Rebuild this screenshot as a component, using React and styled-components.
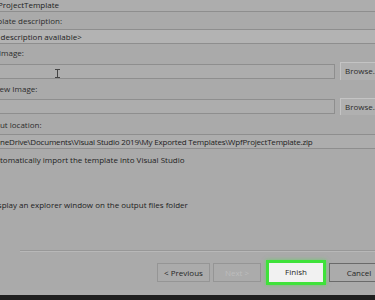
import React from "react";
import styled, { createGlobalStyle } from "styled-components";

const Global = createGlobalStyle`
  html, body {
    margin: 0;
    padding: 0;
    background: #aaaaaa;
  }
  body {
    font-family: "Open Sans", "Noto Sans", sans-serif;
    font-size: 8px;
    color: #2a2a2a;
  }
`;

const Screen = styled.div`
  width: 375px;
  height: 300px;
  overflow: hidden;
  display: flex;
  flex-direction: column;
  background: #aaaaaa;
`;

// dialog is cropped on the left, so it starts a bit off-screen
const Dialog = styled.div`
  flex: 1;
  margin-left: -22px;
`;

const Label = styled.div`
  height: ${(p) => p.h || 18}px;
  line-height: ${(p) => p.h || 18}px;
  padding-left: 3px;
  white-space: nowrap;
  color: #2c2c2c;
`;

const TextBox = styled.div`
  box-sizing: border-box;
  height: ${(p) => p.h || 15}px;
  line-height: ${(p) => (p.h || 15) - 2}px;
  margin-top: ${(p) => p.mt || 0}px;
  padding-left: ${(p) => p.pl || 5}px;
  letter-spacing: ${(p) => p.ls || 0}px;
  flex: ${(p) => (p.grow ? 1 : "none")};
  border-top: 1px solid #8e8e8e;
  border-bottom: 1px solid #8e8e8e;
  border-right: ${(p) => (p.grow ? "1px solid #8e8e8e" : "none")};
  background: ${(p) => (p.light ? "#b3b3b3" : "#adadad")};
  white-space: nowrap;
  overflow: hidden;
  color: #222;
  position: relative;
`;

const FieldRow = styled.div`
  display: flex;
  align-items: center;
  gap: 5px;
  height: ${(p) => p.h || 18}px;
`;

const BrowseButton = styled.div`
  box-sizing: border-box;
  flex: none;
  width: 35px;
  height: ${(p) => p.h || 18}px;
  line-height: ${(p) => (p.h || 18) - 2}px;
  padding-left: 4px;
  background: #b0b0b0;
  border-left: 1px solid #c4c4c4;
  border-top: 1px solid #c4c4c4;
  white-space: nowrap;
  color: #2c2c2c;
`;

const Cursor = styled.span`
  position: absolute;
  left: 77px;
  top: 4px;
  width: 5px;
  height: 9px;
  &::before {
    content: "";
    position: absolute;
    left: 2px;
    top: 0;
    width: 1px;
    height: 9px;
    background: #444;
  }
  &::after {
    content: "";
    position: absolute;
    left: 0;
    top: 0;
    width: 5px;
    height: 9px;
    border-top: 1px solid #444;
    border-bottom: 1px solid #444;
    box-sizing: border-box;
  }
`;

const CheckRow = styled.div`
  height: 18px;
  line-height: 18px;
  padding-left: 12px;
  margin-top: ${(p) => p.mt || 0}px;
  white-space: nowrap;
  color: #222;
`;

const Separator = styled.div`
  margin: ${(p) => p.mt || 0}px 0 0 42px;
  height: 0;
  border-top: 1px solid #989898;
  border-bottom: 1px solid #b8b8b8;
`;

const ButtonBar = styled.div`
  display: flex;
  gap: 3px;
  margin: 11px 0 0 179px;
  align-items: center;
`;

const DialogButton = styled.div`
  box-sizing: border-box;
  flex: none;
  width: ${(p) => p.w || 53}px;
  height: 19px;
  line-height: 17px;
  text-align: center;
  border: 1px solid ${(p) => (p.dark ? "#6a6a6a" : "#959595")};
  background: #ababab;
  color: ${(p) => (p.disabled ? "#bdbdbd" : "#262626")};
  white-space: nowrap;
`;

const FinishButton = styled.div`
  box-sizing: border-box;
  flex: none;
  width: 54px;
  height: 19px;
  line-height: 17px;
  text-align: center;
  background: #f1f1f1;
  color: #262626;
  outline: 3px solid #3fe23a;
  box-shadow: 0 0 4px 3px rgba(60, 230, 60, 0.55);
  margin: 0 3px 0 5px;
`;

const Taskbar = styled.div`
  flex: none;
  height: 5px;
  background: #1e1e1e;
`;

export default function App() {
  return (
    <>
      <Global />
      <Screen>
        <Dialog>
          <TextBox h={15} mt={-3}>
            WpfProjectTemplate
          </TextBox>
          <Label h={17}>Template description:</Label>
          <TextBox h={15} light>
            &lt;No description available&gt;
          </TextBox>
          <Label h={18}>Icon Image:</Label>
          <FieldRow h={18}>
            <TextBox h={15} grow>
              <Cursor />
            </TextBox>
            <BrowseButton>Browse...</BrowseButton>
          </FieldRow>
          <Label h={18}>Preview Image:</Label>
          <FieldRow h={17}>
            <TextBox h={15} grow />
            <BrowseButton h={17}>Browse...</BrowseButton>
          </FieldRow>
          <Label h={19}>Output location:</Label>
          <TextBox h={15} pl={16} ls={-0.2}>
            OneDrive\Documents\Visual Studio 2019\My Exported Templates\WpfProjectTemplate.zip
          </TextBox>
          <CheckRow mt={2}>Automatically import the template into Visual Studio</CheckRow>
          <CheckRow mt={27}>Display an explorer window on the output files folder</CheckRow>
          <Separator mt={36} />
          <ButtonBar>
            <DialogButton>&lt; Previous</DialogButton>
            <DialogButton disabled w={48}>Next &gt;</DialogButton>
            <FinishButton>Finish</FinishButton>
            <DialogButton dark w={60}>Cancel</DialogButton>
          </ButtonBar>
        </Dialog>
        <Taskbar />
      </Screen>
    </>
  );
}
